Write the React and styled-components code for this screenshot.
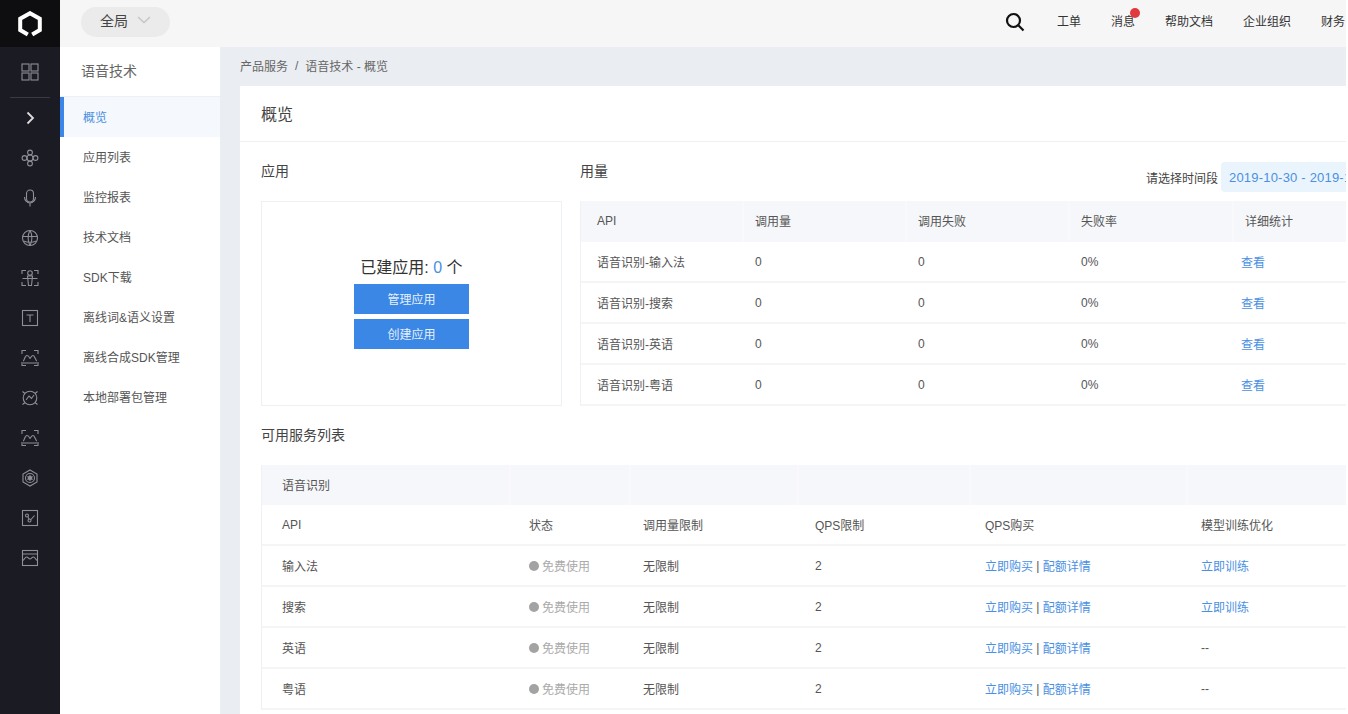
import React from "react";
import styled, { createGlobalStyle } from "styled-components";

const Global = createGlobalStyle`
  html, body { margin: 0; padding: 0; height: 100%; overflow: hidden; background: #fff; }
  body { font-family: "Liberation Sans", "Noto Sans CJK SC", sans-serif; font-size: 12px; color: #333; }
  * { box-sizing: border-box; }
`;

const Page = styled.div`
  display: flex;
  width: 1346px;
  height: 714px;
  overflow: hidden;
`;

const Rail = styled.aside`
  flex: none;
  width: 60px;
  display: flex;
  flex-direction: column;
  align-items: center;
  background: #1b1b24;
`;

const LogoBox = styled.div`
  width: 60px;
  height: 47px;
  flex: none;
  display: flex;
  align-items: center;
  justify-content: center;
  background: #0e0e11;
`;

const RailSlot = styled.div`
  width: 60px;
  height: ${(p) => p.$h || 40}px;
  flex: none;
  display: flex;
  align-items: center;
  justify-content: center;
  color: #8f8f96;
`;

const RailDivider = styled.div`
  width: 40px;
  height: 1px;
  flex: none;
  margin-bottom: -1px;
  background: #3a3a42;
`;

const Right = styled.div`
  flex: 1;
  min-width: 0;
  display: flex;
  flex-direction: column;
`;

const TopBar = styled.header`
  flex: none;
  height: 47px;
  display: flex;
  align-items: center;
  padding: 0 1px 3px 21px;
  background: #f6f6f7;
`;

const Scope = styled.div`
  width: 89px;
  height: 30px;
  display: flex;
  align-items: center;
  gap: 9px;
  padding: 0 0 4px 19px;
  border-radius: 15px;
  background: #ebebeb;
  font-size: 14px;
  color: #444;
`;

const TopNav = styled.nav`
  margin-left: auto;
  display: flex;
  align-items: center;
  gap: 30px;
  font-size: 12px;
  color: #333;
`;

const SearchButton = styled.div`
  display: flex;
  margin-right: 2px;
  color: #111;
`;

const NavItem = styled.span`
  position: relative;
  margin-bottom: 4px;
`;

const RedDot = styled.i`
  position: absolute;
  top: -4px;
  right: -5px;
  width: 10px;
  height: 10px;
  border-radius: 50%;
  background: #e0393e;
`;

const Body = styled.div`
  flex: 1;
  min-height: 0;
  display: flex;
`;

const SideNav = styled.nav`
  flex: none;
  width: 160px;
  background: #fff;
`;

const SideTitle = styled.div`
  height: 50px;
  display: flex;
  align-items: center;
  padding: 0 0 3px 21px;
  font-size: 14px;
  color: #666;
  border-bottom: 1px solid #edf0f4;
`;

const SideItem = styled.div`
  height: 40px;
  display: flex;
  align-items: center;
  padding-left: ${(p) => (p.$active ? "19px" : "23px")};
  padding-bottom: 2px;
  font-size: 12px;
  color: ${(p) => (p.$active ? "#4a90e2" : "#555")};
  background: ${(p) => (p.$active ? "#f5f8fc" : "#fff")};
  border-left: ${(p) => (p.$active ? "4px solid #3b86e8" : "none")};
`;

const Main = styled.main`
  flex: 1;
  min-width: 0;
  overflow: hidden;
  padding-left: 20px;
  background: #eaedf1;
`;

const Crumbs = styled.div`
  height: 39px;
  display: flex;
  align-items: center;
  gap: 7px;
  padding-bottom: 2px;
  font-size: 12px;
  color: #666;
`;

const Card = styled.div`
  width: 1240px;
  padding-bottom: 40px;
  background: #fff;
`;

const CardTitle = styled.h1`
  height: 56px;
  margin: 0;
  display: flex;
  align-items: center;
  padding: 0 0 2px 21px;
  font-size: 16px;
  font-weight: 400;
  color: #444;
  border-bottom: 1px solid #eef0f3;
`;

const Overview = styled.div`
  display: flex;
  gap: 18px;
  padding-left: 21px;
`;

const AppColumn = styled.section`
  flex: none;
  width: 301px;
`;

const UsageColumn = styled.section`
  flex: 1;
  min-width: 0;
`;

const SectionHead = styled.div`
  height: 59px;
  display: flex;
  align-items: center;
  padding-bottom: 3px;
  justify-content: space-between;
`;

const SectionTitle = styled.h2`
  margin: 0;
  font-size: 14px;
  font-weight: 400;
  color: #444;
`;

const DateRow = styled.div`
  display: flex;
  align-items: center;
  gap: 3px;
  padding-top: 14px;
  font-size: 12px;
  color: #444;
`;

const DateValue = styled.div`
  width: 259px;
  height: 30px;
  display: flex;
  align-items: center;
  padding-left: 8px;
  border-radius: 4px;
  background: #eaf4fd;
  color: #4a90e2;
  font-size: 13px;
  letter-spacing: 0.2px;
`;

const AppBox = styled.div`
  height: 205px;
  display: flex;
  flex-direction: column;
  align-items: center;
  justify-content: center;
  gap: 5px;
  padding-bottom: 2px;
  border: 1px solid #eef0f3;
`;

const AppCount = styled.div`
  font-size: 16px;
  line-height: 24px;
  margin-bottom: -1px;
  color: #333;
  b {
    font-weight: 400;
    color: #4a90e2;
  }
`;

const Button = styled.div`
  width: 115px;
  height: 30px;
  display: flex;
  align-items: center;
  justify-content: center;
  padding-bottom: 2px;
  background: #3a87e6;
  color: #e6f0fc;
  font-size: 12px;
`;

const GridTable = styled.div`
  border-left: 1px solid #f0f1f4;
`;

const Row = styled.div`
  display: grid;
  grid-template-columns: ${(p) => p.$cols};
  height: ${(p) => p.$h || 41}px;
  align-items: center;
  background: ${(p) => (p.$head ? "#f6f7fa" : "#fff")};
  border-bottom: ${(p) => (p.$head ? "none" : "2px solid #f4f5f7")};
  color: #555;
`;

const Cell = styled.div`
  height: 100%;
  display: flex;
  align-items: center;
  padding-left: ${(p) => p.$pad};
  padding-bottom: ${(p) => p.$up || "0"};
  white-space: nowrap;
  border-left: ${(p) => (p.$split ? "2px solid #f9f9fb" : "none")};
`;

const Link = styled.span`
  color: #4a90e2;
`;

const Status = styled.span`
  display: flex;
  align-items: center;
  gap: 3px;
  color: #aaa;
  &::before {
    content: "";
    width: 10px;
    height: 10px;
    border-radius: 50%;
    background: #a3a3a3;
  }
`;

const Services = styled.section`
  padding-left: 21px;
`;

const ServiceHead = styled.div`
  height: 59px;
  display: flex;
  align-items: center;
  padding-bottom: 4px;
`;

const Stroke = ({ children, size = 20 }) => (
  <svg width={size} height={size} viewBox="0 0 20 20" fill="none" stroke="currentColor" strokeWidth="1.1">
    {children}
  </svg>
);

const railIcons = [
  <>
    <circle cx="10" cy="4.5" r="2.4" /><circle cx="10" cy="15.5" r="2.4" />
    <circle cx="4.5" cy="10" r="2.4" /><circle cx="15.5" cy="10" r="2.4" />
    <circle cx="10" cy="10" r="3" />
  </>,
  <>
    <rect x="6.5" y="2" width="7" height="12" rx="3.500" />
    <path d="M4.500 9a5.500 6 0 0 0 11 0M10 15v3.500" />
  </>,
  <>
    <circle cx="10" cy="10" r="7.500" />
    <path d="M2.500 8.500h15M3.500 13c4 1.500 9 1.500 13 0M10 2.500c-2.500 4-2.500 11 0 15M10 2.500c2.500 4 2.500 11 0 15" />
  </>,
  <>
    <path d="M2 6V2.500h4M14 2.500h4V6M2 14v3.500h4M14 17.500h4V14" />
    <circle cx="10" cy="5" r="2.300" />
    <path d="M2.500 10.500h15M7.500 8h5l-1 9.500h-3z" />
  </>,
  <>
    <rect x="2.500" y="2.500" width="15" height="15" />
    <path d="M6.500 7h7M10 7v7" />
  </>,
  <>
    <path d="M2 6V2.500h4M14 2.500h4V6M2 14v3.500h4M14 17.500h4V14" />
    <path d="M3 13c1.500 0 1.500-5.500 4-5.500s2.500 3 3 3 1-3 3-3 2.500 5.500 4 5.500M3 15h14" />
  </>,
  <>
    <circle cx="10" cy="10" r="6.800" />
    <path d="M2.500 3.500l2.500 2M17.500 3.500l-2.500 2M2.500 16.500l2.500-2M17.500 16.500l-2.500-2" />
    <path d="M6 12l3-4 2.500 2.500L14 7" />
  </>,
  <>
    <path d="M2 6V2.500h4M14 2.500h4V6M2 14v3.500h4M14 17.500h4V14" />
    <path d="M3 13c1.500 0 1.500-5.500 4-5.500s2.500 3 3 3 1-3 3-3 2.500 5.500 4 5.500M3 15h14" />
  </>,
  <>
    <path d="M10 2l7 4v8l-7 4-7-4V6z" />
    <circle cx="10" cy="10" r="4.500" />
    <path d="M10 6.500l3 5.200H7zM10 13.500l-3-5.200h6z" fill="currentColor" stroke="none" />
  </>,
  <>
    <rect x="2.500" y="2.500" width="15" height="15" />
    <circle cx="7" cy="7.500" r="1.500" /><circle cx="9.500" cy="12.500" r="1.500" />
    <path d="M8 9l1 2M11 11.500l3.500-4" />
  </>,
  <>
    <rect x="2.500" y="2.500" width="15" height="15" />
    <path d="M2.500 6h15M2.500 12.500c2 0 2-3.500 4-3.500s2 2 3.500 2 1.500-2 3.500-2 2 3.500 4 3.500" />
  </>,
];

const sideItems = ["应用列表", "监控报表", "技术文档", "SDK下载", "离线词&语义设置", "离线合成SDK管理", "本地部署包管理"];

const usageCols = "158px 163px 163px 164px 1fr";
const usageHeadCols = "161px 163px 163px 164px 1fr";
const usageRows = ["语音识别-输入法", "语音识别-搜索", "语音识别-英语", "语音识别-粤语"];

const serviceCols = "247px 114px 172px 170px 216px 1fr";
const serviceHeadCols = "247px 120px 168px 172px 217px 1fr";
const serviceRows = [
  ["输入法", true],
  ["搜索", true],
  ["英语", false],
  ["粤语", false],
];

const UsageTable = () => (
  <GridTable>
    <Row $cols={usageHeadCols} $head>
      <Cell $pad="16px" $up="2px">API</Cell>
      <Cell $pad="11px" $up="3px" $split>调用量</Cell>
      <Cell $pad="11px" $up="3px" $split>调用失败</Cell>
      <Cell $pad="11px" $up="3px" $split>失败率</Cell>
      <Cell $pad="11px" $up="3px" $split>详细统计</Cell>
    </Row>
    {usageRows.map((name) => (
      <Row $cols={usageCols} key={name}>
        <Cell $pad="16px">{name}</Cell>
        <Cell $pad="16px">0</Cell>
        <Cell $pad="16px">0</Cell>
        <Cell $pad="16px">0%</Cell>
        <Cell $pad="12px"><Link>查看</Link></Cell>
      </Row>
    ))}
  </GridTable>
);

const ServiceTable = () => (
  <GridTable>
    <Row $cols={serviceHeadCols} $head $h={40}>
      <Cell $pad="20px" $up="2px">语音识别</Cell>
      <Cell $split />
      <Cell $split />
      <Cell $split />
      <Cell $split />
      <Cell $split />
    </Row>
    <Row $cols={serviceCols}>
      <Cell $pad="20px">API</Cell>
      <Cell $pad="20px">状态</Cell>
      <Cell $pad="20px">调用量限制</Cell>
      <Cell $pad="20px">QPS限制</Cell>
      <Cell $pad="20px">QPS购买</Cell>
      <Cell $pad="20px">模型训练优化</Cell>
    </Row>
    {serviceRows.map(([name, train]) => (
      <Row $cols={serviceCols} key={name}>
        <Cell $pad="20px">{name}</Cell>
        <Cell $pad="20px"><Status>免费使用</Status></Cell>
        <Cell $pad="20px">无限制</Cell>
        <Cell $pad="20px">2</Cell>
        <Cell $pad="20px"><Link>立即购买</Link>&nbsp;|&nbsp;<Link>配额详情</Link></Cell>
        <Cell $pad="20px">{train ? <Link>立即训练</Link> : "--"}</Cell>
      </Row>
    ))}
  </GridTable>
);

export default function App() {
  return (
    <>
      <Global />
      <Page>
        <Rail>
          <LogoBox>
            <svg width="26" height="26" viewBox="0 0 26 26" fill="none" stroke="#fff" strokeWidth="4">
              <path d="M10.800 23.500L3.200 19V7.700L13 2.200l9.800 5.500V19l-7.600 4.500" />
            </svg>
          </LogoBox>
          <RailSlot $h={50}>
            <Stroke>
              <rect x="2" y="2" width="7" height="7" /><rect x="11" y="2" width="7" height="7" />
              <rect x="2" y="11" width="7" height="7" /><rect x="11" y="11" width="7" height="7" />
            </Stroke>
          </RailSlot>
          <RailDivider />
          <RailSlot $h={41}>
            <svg width="14" height="14" viewBox="0 0 14 14" fill="none" stroke="#ddd" strokeWidth="1.800">
              <path d="M4.500 1.500L10 7l-5.500 5.500" />
            </svg>
          </RailSlot>
          {railIcons.map((icon, i) => (
            <RailSlot key={i}>
              <Stroke>{icon}</Stroke>
            </RailSlot>
          ))}
        </Rail>
        <Right>
          <TopBar>
            <Scope>
              全局
              <svg width="14" height="8" viewBox="0 0 14 8" fill="none" stroke="#c4c4c4" strokeWidth="1.300">
                <path d="M1 1l6 5.500L13 1" />
              </svg>
            </Scope>
            <TopNav>
              <SearchButton>
                <svg width="20" height="20" viewBox="0 0 20 20" fill="none" stroke="currentColor" strokeWidth="2.200">
                  <circle cx="8.500" cy="8.500" r="6.500" /><path d="M13.300 13.300L18.500 18.500" />
                </svg>
              </SearchButton>
              <NavItem>工单</NavItem>
              <NavItem>消息<RedDot /></NavItem>
              <NavItem>帮助文档</NavItem>
              <NavItem>企业组织</NavItem>
              <NavItem>财务</NavItem>
            </TopNav>
          </TopBar>
          <Body>
            <SideNav>
              <SideTitle>语音技术</SideTitle>
              <SideItem $active>概览</SideItem>
              {sideItems.map((item) => (
                <SideItem key={item}>{item}</SideItem>
              ))}
            </SideNav>
            <Main>
              <Crumbs>
                <span>产品服务</span><span>/</span><span>语音技术 - 概览</span>
              </Crumbs>
              <Card>
                <CardTitle>概览</CardTitle>
                <Overview>
                  <AppColumn>
                    <SectionHead><SectionTitle>应用</SectionTitle></SectionHead>
                    <AppBox>
                      <AppCount>已建应用: <b>0</b> 个</AppCount>
                      <Button>管理应用</Button>
                      <Button>创建应用</Button>
                    </AppBox>
                  </AppColumn>
                  <UsageColumn>
                    <SectionHead>
                      <SectionTitle>用量</SectionTitle>
                      <DateRow>
                        请选择时间段
                        <DateValue>2019-10-30 - 2019-11-06</DateValue>
                      </DateRow>
                    </SectionHead>
                    <UsageTable />
                  </UsageColumn>
                </Overview>
                <Services>
                  <ServiceHead><SectionTitle>可用服务列表</SectionTitle></ServiceHead>
                  <ServiceTable />
                </Services>
              </Card>
            </Main>
          </Body>
        </Right>
      </Page>
    </>
  );
}
